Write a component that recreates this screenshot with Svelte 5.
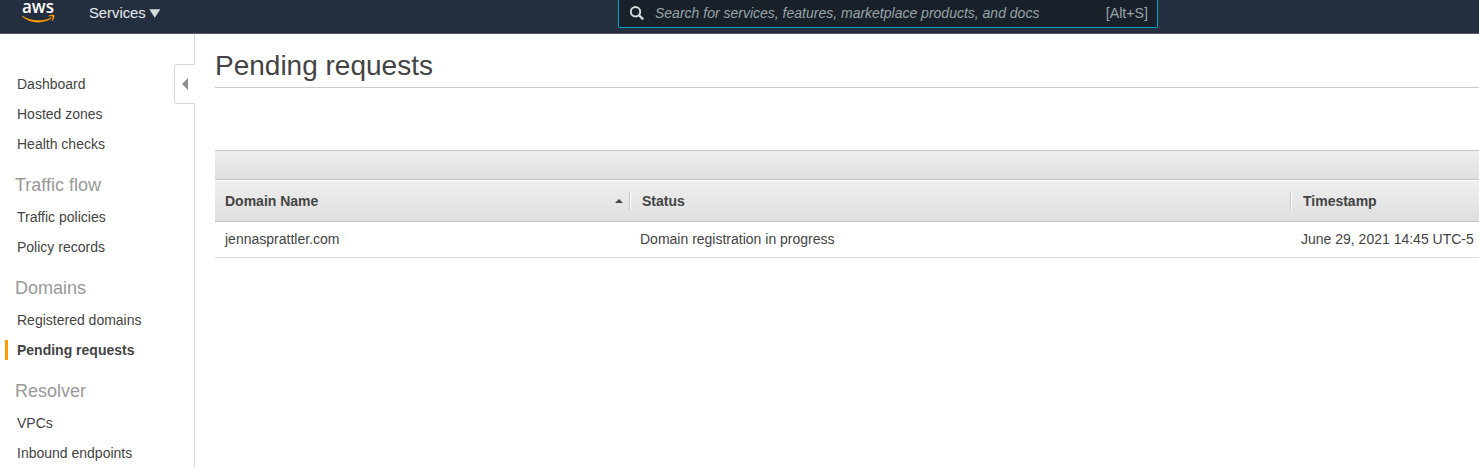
<script>
  const groups = [
    { title: '', items: ['Dashboard', 'Hosted zones', 'Health checks'] },
    { title: 'Traffic flow', items: ['Traffic policies', 'Policy records'] },
    { title: 'Domains', items: ['Registered domains', 'Pending requests'] },
    { title: 'Resolver', items: ['VPCs', 'Inbound endpoints'] }
  ];
  const active = 'Pending requests';
  const columns = ['Domain Name', 'Status', 'Timestamp'];
  const rows = [['jennasprattler.com', 'Domain registration in progress', 'June 29, 2021 14:45 UTC-5']];
</script>

<div class="page">
  <header>
    <div class="logo">
      <svg width="36" height="25" viewBox="0 0 36 25" fill="#ff9900">
        <text x="0" y="13.400" textLength="32" lengthAdjust="spacingAndGlyphs" fill="#fff">aws</text>
        <path d="M.9 16C8.500 21.300 20.500 21.600 28.500 17.700C29.500 17.200 30 18 29.200 18.600C21.500 24.100 8 23.800.3 16.700C0 16.300.4 15.700.9 16Z" />
        <path d="M26.300 15.900C28.300 14.600 31.700 14.600 32.300 15.200C32.900 15.900 32 19.400 30.300 20.800C29.800 21.200 29.500 20.900 29.700 20.400C30.200 19.200 30.900 17.200 30.600 16.700C30.200 16.200 27.900 16.300 26.800 16.400C26.200 16.500 26 16.100 26.300 15.900Z" />
      </svg>
    </div>
    <div class="services">
      <span>Services</span>
      <svg width="12" height="9" viewBox="0 0 12 9"><path d="M.3.200H11.300L5.800 8.700Z" fill="#d5dbdb" /></svg>
    </div>
    <div class="search">
      <svg width="15" height="15" viewBox="0 0 15 15" fill="none" stroke="#d5dbdb" stroke-width="2">
        <circle cx="5.500" cy="5.800" r="4.700" />
        <path d="M8.900 9.200L13.200 13.300" stroke-width="2.300" />
      </svg>
      <span class="hint">Search for services, features, marketplace products, and docs</span>
      <span class="key">[Alt+S]</span>
    </div>
  </header>

  <div class="body">
    <nav>
      {#each groups as group}
        {#if group.title}<h2>{group.title}</h2>{/if}
        <ul>
          {#each group.items as item}
            <li class:active={item === active}><span>{item}</span></li>
          {/each}
        </ul>
      {/each}
      <div class="toggle">
        <svg width="6" height="12" viewBox="0 0 6 12"><path d="M6 0V12L0 6Z" fill="#8f8f8f" /></svg>
      </div>
    </nav>

    <main>
      <h1>Pending requests</h1>
      <div class="table">
        <div class="toolbar"></div>
        <div class="row head">
          {#each columns as column, i}
            <div class="cell">
              <span>{column}</span>
              {#if i === 0}
                <svg width="8" height="5" viewBox="0 0 8 5"><path d="M0 4L4 0L8 4Z" fill="#444" /></svg>
              {/if}
            </div>
          {/each}
        </div>
        {#each rows as row}
          <div class="row data">
            {#each row as value}<div class="cell">{value}</div>{/each}
          </div>
        {/each}
      </div>
    </main>
  </div>
</div>

<style>
  :global(body) { margin: 0; background: #fff; }
  .page {
    height: 468px;
    overflow: hidden;
    display: flex;
    flex-direction: column;
    font: 14px/30px "Liberation Sans", Arial, sans-serif;
    color: #444;
  }
  header {
    box-sizing: border-box;
    height: 34px;
    flex: none;
    display: flex;
    align-items: flex-start;
    background: #232f3e;
    border-bottom: 1px solid #5a5a68;
  }
  .logo { width: 67px; padding-left: 22px; display: flex; }
  .logo svg { overflow: visible; }
  .logo text { font-family: "Open Sans", sans-serif; font-size: 17.500px; font-weight: 600; }
  .services {
    width: 529px;
    display: flex;
    align-items: center;
    gap: 3px;
    height: 26px;
    font-size: 14.800px;
    color: #eaeded;
  }
  .search {
    box-sizing: border-box;
    width: 540px;
    height: 28px;
    display: flex;
    align-items: center;
    padding: 0 9px 1px 11px;
    background: #1a202a;
    border: 1px solid #00a1c9;
    border-top: 0;
    border-radius: 0 0 2px 2px;
    color: #95a5a6;
  }
  .hint { margin-left: 10px; font-size: 14px; font-style: italic; white-space: nowrap; }
  .key { margin-left: auto; font-size: 14.200px; }
  .body { flex: 1; min-height: 0; display: flex; }
  nav {
    position: relative;
    box-sizing: border-box;
    width: 195px;
    flex: none;
    padding-top: 35px;
    border-right: 1px solid #d9d9d9;
  }
  ul { margin: 0; padding: 0; list-style: none; }
  li { height: 30px; padding-left: 5px; display: flex; align-items: center; }
  li span { padding-left: 9px; line-height: 20px; border-left: 3px solid transparent; }
  li.active span { border-color: #ff9900; font-weight: bold; }
  h2 {
    margin: 0;
    padding: 11px 0 0 15px;
    height: 32px;
    line-height: 30px;
    font-size: 18px;
    font-weight: normal;
    color: #999;
  }
  .toggle {
    position: absolute;
    top: 30px;
    right: -1px;
    box-sizing: border-box;
    width: 21px;
    height: 40px;
    display: flex;
    align-items: center;
    padding-left: 7px;
    background: #fff;
    border: 1px solid #d9d9d9;
    border-right: 0;
    border-radius: 4px 0 0 4px;
  }
  main { flex: 1; min-width: 0; padding-left: 20px; }
  h1 {
    margin: 0 0 62px;
    height: 53px;
    line-height: 64px;
    font-size: 28px;
    font-weight: normal;
    border-bottom: 1px solid #ccc;
  }
  .toolbar {
    height: 28px;
    border-top: 1px solid #c4c4c4;
    border-bottom: 1px solid #c4c4c4;
    background: linear-gradient(#eee, #dfdfdf);
  }
  .row { display: grid; grid-template-columns: 415px 661px 1fr; }
  .cell { display: flex; align-items: center; padding-left: 10px; white-space: nowrap; }
  .head {
    height: 40px;
    border-top: 1px solid #fff;
    border-bottom: 1px solid #c4c4c4;
    background: linear-gradient(#eee, #dfdfdf);
    font-weight: bold;
  }
  .head .cell {
    align-self: center;
    height: 18px;
    box-sizing: border-box;
    justify-content: space-between;
    padding-right: 6px;
    border-right: 1px solid #c4c4c4;
  }
  .head .cell:last-child { border-right: 0; }
  .head .cell + .cell { padding-left: 11px; border-left: 1px solid #fff; }
  .data { height: 35px; border-bottom: 1px solid #ddd; }
  .data .cell { padding-bottom: 2px; }
</style>
